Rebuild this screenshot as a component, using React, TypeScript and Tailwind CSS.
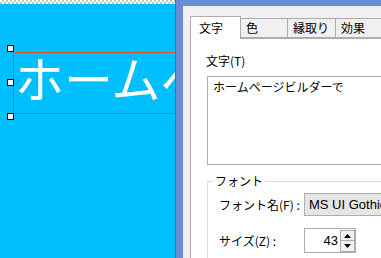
import React from "react";

const jp = "font-['Noto_Sans_CJK_JP','Noto_Sans',sans-serif]";

const tabs = [
  { label: "色", w: "w-[47px]" },
  { label: "縁取り", w: "w-[48px]" },
  { label: "効果", w: "w-[60px]" },
];

function Handle({ top }: { top: string }) {
  return <div className={`absolute left-[7px] ${top} w-[7px] h-[7px] bg-white border border-black`} />;
}

export default function App() {
  return (
    <div className={`flex w-[381px] h-[258px] overflow-hidden ${jp}`}>
      {/* canvas */}
      <div className="relative w-[175px] h-full bg-[#00bfff] overflow-hidden shrink-0">
        <div className="h-[4px] bg-[repeating-conic-gradient(#c4c4c4_0%_25%,#ffffff_0%_50%)] bg-[length:4px_4px]" />
        <div className="absolute left-[13px] top-[52px] w-[200px] h-[62px] border border-[#e0502a]" />
        <div className="absolute left-[15px] top-[52px] text-white text-[49px] leading-none whitespace-nowrap">
          ホームページ
        </div>
        <Handle top="top-[45px]" />
        <Handle top="top-[79px]" />
        <Handle top="top-[113px]" />
      </div>
      <div className="w-px h-full bg-[#3f6db0] shrink-0" />

      {/* dialog frame */}
      <div className="flex-1 h-full bg-[#6a8cd5] pl-[7px] pt-[6px]">
        <div className="h-full bg-[#f0f0f0] pl-[7px] pt-[9px] text-[12px] text-black">
          {/* tab header */}
          <div className="flex items-end h-[23px]">
            <div className="relative z-10 w-[51px] h-[23px] -mb-px bg-white border border-b-0 border-[#adadad] pl-[8px] pt-[3px] leading-[16px]">
              文字
            </div>
            {tabs.map((t) => (
              <div
                key={t.label}
                className={`${t.w} h-[20px] bg-[#f0f0f0] border border-l-0 border-[#acacac] pl-[5px] pt-[1px] leading-[16px] whitespace-nowrap`}
              >
                {t.label}
              </div>
            ))}
          </div>

          {/* panel */}
          <div className="h-[240px] bg-white border-t border-l border-[#adadad] pl-[15px] pt-[14px]">
            <div className="leading-[16px]">文字(T)</div>
            <div className="mt-[7px] ml-px h-[89px] border border-[#abadb3] px-[5px] pt-[2px] leading-[16px] whitespace-nowrap">
              ホームページビルダーで
            </div>

            <div className="relative mt-[16px] ml-px h-[100px] border-t border-l border-[#dcdcdc] pl-[11px] pt-[11px]">
              <span className="absolute left-[5px] -top-[9px] bg-white px-[2px] leading-[16px]">フォント</span>
              <div className="flex items-center h-[23px]">
                <div className="w-[85px] whitespace-nowrap">フォント名(F) :</div>
                <div className="flex-1 h-[23px] bg-[#e5e5e5] border border-[#adadad] pl-[4px] text-[13px] leading-[21px] whitespace-nowrap font-['Liberation_Sans',sans-serif]">
                  MS UI Gothic
                </div>
              </div>
              <div className="flex items-center h-[25px] mt-[12px]">
                <div className="w-[85px] whitespace-nowrap">サイズ(Z) :</div>
                <div className="flex w-[52px] h-[25px] bg-white border border-[#adadad]">
                  <div className="flex-1 text-right pr-[2px] text-[13px] leading-[23px] font-['Liberation_Sans',sans-serif]">43</div>
                  <div className="flex flex-col w-[15px] pt-px">
                    <div className="flex items-center justify-center h-[11px] bg-[#f0f0f0] border border-[#acacac]">
                      <svg width="7" height="4" viewBox="0 0 7 4"><path d="M3.5 0L7 4H0z" fill="#000" /></svg>
                    </div>
                    <div className="flex items-center justify-center h-[11px] bg-[#f0f0f0] border border-t-0 border-[#acacac]">
                      <svg width="7" height="4" viewBox="0 0 7 4"><path d="M0 0H7L3.5 4z" fill="#000" /></svg>
                    </div>
                  </div>
                </div>
              </div>
            </div>
          </div>
        </div>
      </div>
    </div>
  );
}
